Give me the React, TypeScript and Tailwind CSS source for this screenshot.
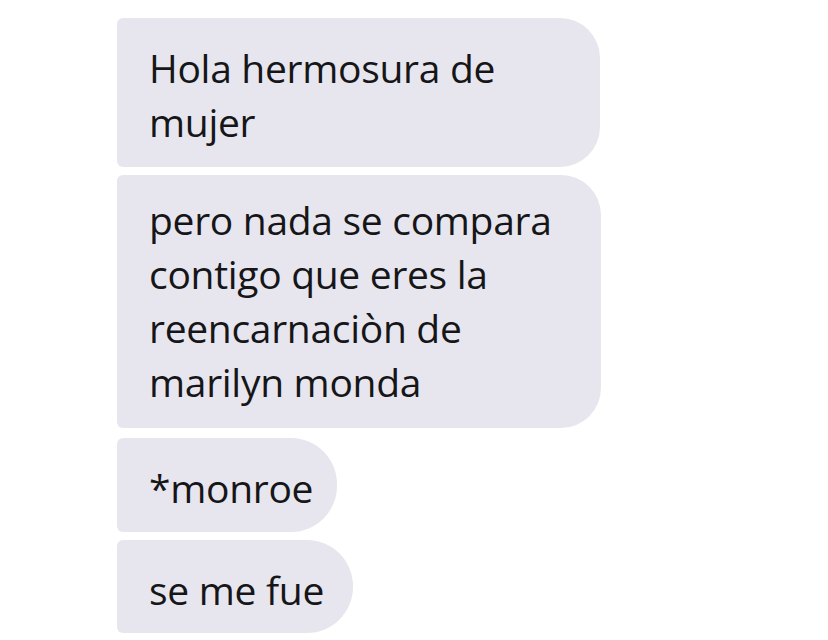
const bubble = "rounded-l-[6px] bg-[#e7e6ef] pl-[32px] text-[39px] leading-[54px] tracking-[-0.3px]"

export default function App() {
  return (
    <div className="w-[828px] h-[640px] bg-white overflow-hidden pl-[117px] pt-[18px] font-['Open_Sans',sans-serif] text-[#161618]">
      <div className="flex flex-col items-start">
        <div className={`${bubble} w-[483px] h-[149px] rounded-r-[40px] pt-[23px]`}>
          <div>Hola hermosura de</div>
          <div>mujer</div>
        </div>
        <div className={`${bubble} mt-[8px] w-[484px] h-[253px] rounded-r-[40px] pt-[18px]`}>
          <div>pero nada se compara</div>
          <div>contigo que eres la</div>
          <div>reencarnaciòn de</div>
          <div>marilyn monda</div>
        </div>
        <div className={`${bubble} mt-[10px] w-[220px] h-[94px] rounded-r-[46px] pt-[23px]`}>
          *monroe
        </div>
        <div className={`${bubble} mt-[8px] w-[236px] h-[93px] rounded-r-[46px] pt-[23px]`}>
          se me fue
        </div>
      </div>
    </div>
  )
}
